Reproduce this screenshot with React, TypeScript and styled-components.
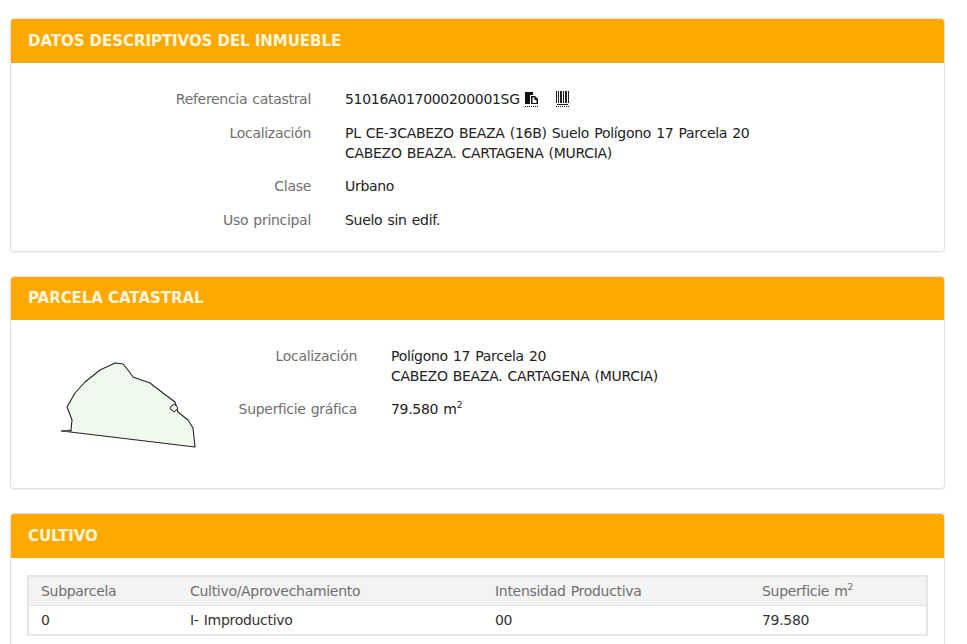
import styled, { createGlobalStyle } from "styled-components";

const GlobalStyle = createGlobalStyle`
  html, body {
    margin: 0;
    padding: 0;
    background: #fff;
    overflow: hidden;
  }
  body {
    font-family: "DejaVu Sans", Verdana, sans-serif;
    font-size: 14px;
    line-height: 20px;
    letter-spacing: -0.3px;
    word-spacing: 1px;
    color: #333;
  }
`;

const Page = styled.div`
  width: 935px;
  padding: 18px 0 0 10px;
  display: flex;
  flex-direction: column;
  gap: 24px;
`;

const Card = styled.section`
  background: #fff;
  border: 1px solid #e2e2e2;
  border-radius: 4px;
  box-shadow: 0 1px 1px rgba(0, 0, 0, 0.05);
  overflow: hidden;
`;

const CardHeader = styled.h3<{ $height: number }>`
  margin: -1px -1px 0;
  height: ${(p) => p.$height}px;
  padding-left: 18px;
  display: flex;
  align-items: center;
  background: #ffa800;
  color: #fff7dc;
  font-size: 15px;
  font-weight: 700;
  letter-spacing: -0.05px;
  word-spacing: 0;
`;

const CardBody = styled.div<{ $padding: string; $minHeight?: number }>`
  padding: ${(p) => p.$padding};
  min-height: ${(p) => p.$minHeight ?? 0}px;
  box-sizing: border-box;
`;

const Rows = styled.div<{ $label: number }>`
  display: grid;
  grid-template-columns: ${(p) => p.$label}px 1fr;
  column-gap: 34px;
  row-gap: 14px;
`;

const Label = styled.div`
  text-align: right;
  color: #6f6f6f;
`;

const Value = styled.div`
  color: #222;
`;

const TwoLineValue = styled(Value)`
  margin-bottom: -1px;
`;

const RefLine = styled.div`
  display: flex;
  align-items: center;
`;

const CopyIcon = styled.svg`
  margin-left: 4px;
`;

const BarcodeIcon = styled.svg`
  margin-left: 16px;
`;

const ParcelLayout = styled.div`
  display: flex;
  align-items: flex-start;
`;

const ParcelShape = styled.svg`
  flex: none;
  margin: 14px 0 0 49px;
`;

const ParcelRows = styled(Rows)`
  margin-left: 32px;
`;

const Sup = styled.sup`
  font-size: 9px;
  line-height: 0;
`;

const Table = styled.table`
  width: 100%;
  border-collapse: collapse;
  border: 2px solid #e6e6e6;
  table-layout: fixed;
`;

const Th = styled.th<{ $width: number }>`
  box-sizing: border-box;
  width: ${(p) => p.$width}px;
  height: 29px;
  padding: 0 0 0 12px;
  background: #f3f3f3;
  border-bottom: 1px solid #e6e6e6;
  color: #6f6f6f;
  font-weight: 400;
  text-align: left;
`;

const Td = styled.td`
  height: 30px;
  padding: 1px 0 0 12px;
  box-sizing: border-box;
  color: #333;
`;

function CopyGlyph() {
  return (
    <CopyIcon width="15" height="16" viewBox="0 0 15 16">
      <path d="M1 1h8v3H6v9H1z" fill="#111" />
      <path d="M7 5h4l3 3v5H7z" fill="#111" />
      <path d="M8.500 6.500h2v2.500h2V12h-4z" fill="#fff" />
      <path d="M1 15.500h13" stroke="#111" strokeWidth="1" strokeDasharray="1 1" />
    </CopyIcon>
  );
}

function BarcodeGlyph() {
  const bars = [1, 3, 5, 6, 8, 10, 11, 13];
  return (
    <BarcodeIcon width="16" height="16" viewBox="0 0 16 16">
      {bars.map((x) => (
        <rect key={x} x={x} y="0" width="1" height="12" fill="#222" />
      ))}
      <path d="M2 13.500h11" stroke="#222" />
      <path d="M1 15.500h14" stroke="#222" strokeDasharray="1 1" />
    </BarcodeIcon>
  );
}

function ParcelGlyph() {
  return (
    <ParcelShape width="140" height="90" viewBox="0 0 140 90">
      <path
        d="M2 71 L11 70 L12 60 L9 52 L7 47 L15 33 L25 22 L40 10 L55 3 L63 4 L68 10 L73 17 L90 23 L103 33 L115 42 L118 52 L128 60 L133 68 L135 87 Z"
        fill="#f0faec"
        stroke="#222"
        strokeWidth="1.100"
        strokeLinejoin="round"
      />
      <path d="M2 71 H11" stroke="#555" strokeWidth="2" strokeLinecap="round" />
      <rect
        x="111"
        y="45"
        width="6"
        height="6"
        rx="1.500"
        transform="rotate(45 114 48)"
        fill="#fff"
        stroke="#333"
        strokeWidth="1"
      />
    </ParcelShape>
  );
}

export default function App() {
  return (
    <Page>
      <GlobalStyle />
      <Card>
        <CardHeader $height={45}>DATOS DESCRIPTIVOS DEL INMUEBLE</CardHeader>
        <CardBody $padding="26px 0 21px 0">
          <Rows $label={300}>
            <Label>Referencia catastral</Label>
            <Value>
              <RefLine>
                51016A017000200001SG
                <CopyGlyph />
                <BarcodeGlyph />
              </RefLine>
            </Value>
            <Label>Localización</Label>
            <TwoLineValue>
              PL CE-3CABEZO BEAZA (16B) Suelo Polígono 17 Parcela 20
              <br />
              CABEZO BEAZA. CARTAGENA (MURCIA)
            </TwoLineValue>
            <Label>Clase</Label>
            <Value>Urbano</Value>
            <Label>Uso principal</Label>
            <Value>Suelo sin edif.</Value>
          </Rows>
        </CardBody>
      </Card>

      <Card>
        <CardHeader $height={44}>PARCELA CATASTRAL</CardHeader>
        <CardBody $padding="26px 0 0 0" $minHeight={168}>
          <ParcelLayout>
            <ParcelGlyph />
            <ParcelRows $label={125}>
              <Label>Localización</Label>
              <TwoLineValue>
                Polígono 17 Parcela 20
                <br />
                CABEZO BEAZA. CARTAGENA (MURCIA)
              </TwoLineValue>
              <Label>Superficie gráfica</Label>
              <Value>
                79.580 m<Sup>2</Sup>
              </Value>
            </ParcelRows>
          </ParcelLayout>
        </CardBody>
      </Card>

      <Card>
        <CardHeader $height={45}>CULTIVO</CardHeader>
        <CardBody $padding="17px 18px 22px 16px">
          <Table>
            <thead>
              <tr>
                <Th $width={150}>Subparcela</Th>
                <Th $width={305}>Cultivo/Aprovechamiento</Th>
                <Th $width={267}>Intensidad Productiva</Th>
                <Th $width={177}>
                  Superficie m<Sup>2</Sup>
                </Th>
              </tr>
            </thead>
            <tbody>
              <tr>
                <Td>0</Td>
                <Td>I- Improductivo</Td>
                <Td>00</Td>
                <Td>79.580</Td>
              </tr>
            </tbody>
          </Table>
        </CardBody>
      </Card>
    </Page>
  );
}
